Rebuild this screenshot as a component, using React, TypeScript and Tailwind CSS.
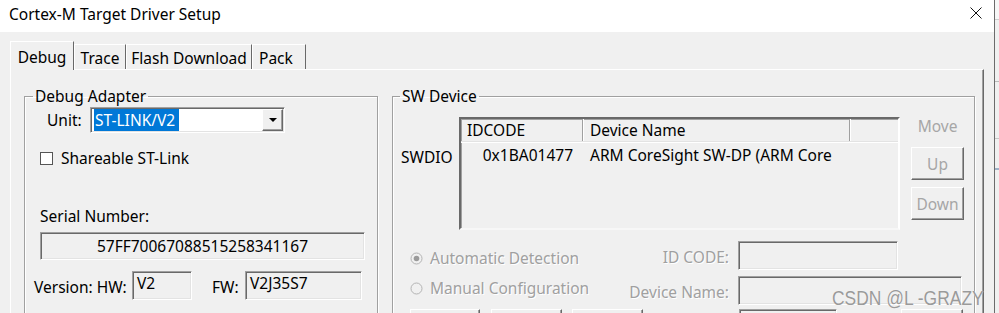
import React from 'react';

const sunken =
  'border border-t-[#a0a0a0] border-l-[#a0a0a0] border-r-white border-b-white shadow-[inset_1px_1px_0_#696969,inset_-1px_-1px_0_#e3e3e3]';
const raised =
  'border border-t-white border-l-white border-r-[#696969] border-b-[#696969] shadow-[inset_-1px_-1px_0_#a0a0a0]';
const etched = 'border border-[#a0a0a0] shadow-[inset_1px_1px_0_#fff,1px_1px_0_#fff]';
const disabled = 'text-[#a0a0a0] [text-shadow:1px_1px_0_#fff]';

function Radio({ checked }: { checked?: boolean }) {
  return (
    <svg width="13" height="13" viewBox="0 0 13 13" className="shrink-0">
      <circle cx="6.5" cy="6.5" r="5.5" fill="#f0f0f0" stroke="#b4b4b4" />
      {checked && <circle cx="6.5" cy="6.5" r="2.8" fill="#9a9a9a" />}
    </svg>
  );
}

function Tab({ label, active, w, left }: { label: string; active?: boolean; w: string; left?: boolean }) {
  return (
    <div
      className={`${w} flex items-center pt-[2px] border-t border-l border-t-white border-l-white border-r border-r-[#696969] ${
        left ? 'justify-start pl-[6px]' : 'justify-center'
      } ${active ? 'h-[29px] -mb-px relative z-10 bg-[#f0f0f0]' : 'h-[25px]'}`}
    >
      {label}
    </div>
  );
}

export default function App() {
  return (
    <div className="w-[999px] h-[313px] overflow-hidden relative flex bg-[#e6e6e6] text-[15.5px] leading-[20px] text-black font-['Noto_Sans',sans-serif]">
      <div className="w-[995px] shrink-0 flex flex-col border-r border-r-[#6b6b6b]">
        {/* title bar */}
        <div className="h-[32px] shrink-0 bg-white flex items-center justify-between pl-[9px] pr-[12px]">
          <span className="-mt-[5px]">Cortex-M Target Driver Setup</span>
          <svg width="12" height="12" viewBox="0 0 12 12" className="-mt-[6px]">
            <path d="M0.5 0.5 L11.5 11.5 M11.5 0.5 L0.5 11.5" stroke="#111" strokeWidth="1" />
          </svg>
        </div>

        <div className="flex-1 bg-[#f0f0f0] pl-[10px] pr-[10px] pt-[9px] flex flex-col">
          {/* tabs */}
          <div className="h-[28px] flex items-end shrink-0">
            <Tab label="Debug" active w="w-[64px]" />
            <Tab label="Trace" w="w-[52px]" />
            <Tab label="Flash Download" w="w-[126px]" />
            <Tab label="Pack" w="w-[54px]" left />
          </div>

          {/* tab panel */}
          <div className="flex-1 border-t border-l border-t-white border-l-white border-r border-r-[#696969] shadow-[inset_-1px_0_0_#a0a0a0] pl-[13px] pt-[16px] flex gap-[14px] items-start">
            {/* Debug Adapter */}
            <fieldset className={`w-[354px] h-[260px] shrink-0 ${etched}`}>
              <legend className="ml-[8px] px-[2px]">Debug Adapter</legend>
              <div className="mt-[1px] h-[26px] flex items-center pl-[22px]">
                <span className="w-[43px]">Unit:</span>
                <div className={`w-[195px] h-[26px] bg-white flex items-center justify-between pl-[3px] pr-[1px] ${sunken}`}>
                  <span className="bg-[#0078d7] text-white h-[22px] leading-[22px] px-[1px] w-[85px] whitespace-nowrap">ST-LINK/V2</span>
                  <div className={`w-[21px] h-[22px] bg-[#f0f0f0] flex items-center justify-center ${raised}`}>
                    <svg width="8" height="4" viewBox="0 0 8 4">
                      <path d="M0 0 H8 L4 4 Z" fill="#000" />
                    </svg>
                  </div>
                </div>
              </div>

              <div className="mt-[15px] h-[20px] flex items-center pl-[15px] gap-[8px]">
                <div className="w-[13px] h-[13px] bg-white border border-[#555]" />
                <span>Shareable ST-Link</span>
              </div>

              <div className="mt-[38px] h-[20px] pl-[15px]">Serial Number:</div>
              <div className={`mt-[6px] ml-[15px] w-[325px] h-[28px] leading-[26px] text-center ${sunken}`}>
                57FF70067088515258341167
              </div>

              <div className="mt-[11px] h-[29px] flex pl-[9px]">
                <span className="w-[98px] pt-[6px] whitespace-nowrap">Version: HW:</span>
                <div className={`w-[60px] h-[29px] pl-[4px] pt-[1px] ${sunken}`}>V2</div>
                <span className="ml-[20px] w-[33px] pt-[6px]">FW:</span>
                <div className={`w-[117px] h-[29px] pl-[4px] pt-[1px] ${sunken}`}>V2J35S7</div>
              </div>
            </fieldset>

            {/* SW Device */}
            <fieldset className={`w-[583px] h-[260px] shrink-0 ${etched}`}>
              <legend className="ml-[7px] px-[2px]">SW Device</legend>
              <div className="mt-[11px] flex">
                <div className="w-[66px] pl-[8px] pt-[30px]">SWDIO</div>
                <div className="w-[441px] h-[113px] border-2 border-t-[#696969] border-l-[#696969] border-r-white border-b-[#f7f7f7] shadow-[inset_1px_1px_0_#a0a0a0]">
                  <div className="h-[23px] flex border-b border-b-[#e3e3e3] shadow-[0_1px_0_#fff]">
                    <div className="w-[122px] pl-[6px] pt-[1px] border-r border-r-[#a0a0a0]">IDCODE</div>
                    <div className="w-[267px] pl-[6px] pt-[1px] border-l border-l-white border-r border-r-[#a0a0a0]">Device Name</div>
                    <div className="flex-1 border-l border-l-white" />
                  </div>
                  <div className="flex pt-[3px] whitespace-nowrap">
                    <div className="w-[122px] text-right pr-[10px]">0x1BA01477</div>
                    <div className="pl-[7px]">ARM CoreSight SW-DP (ARM Core</div>
                  </div>
                </div>
                <div className="ml-[11px] w-[53px] flex flex-col items-center text-[#a6a6a6]">
                  <span className="-mt-px">Move</span>
                  <div className={`mt-[11px] w-[53px] h-[33px] flex items-center justify-center ${raised}`}>Up</div>
                  <div className={`mt-[7px] w-[53px] h-[33px] flex items-center justify-center ${raised}`}>Down</div>
                </div>
              </div>

              {/* detection options */}
              <div className="mt-[11px] h-[29px] flex">
                <div className={`w-[345px] flex items-start whitespace-nowrap ${disabled}`}>
                  <div className="flex items-center gap-[7px] pl-[17px] pt-[7px] flex-1">
                    <Radio checked />
                    <span>Automatic Detection</span>
                  </div>
                  <span className="pr-[9px] pt-[6px]">ID CODE:</span>
                </div>
                <div className={`w-[160px] h-[29px] ${sunken}`} />
              </div>
              <div className="mt-[6px] h-[29px] flex">
                <div className={`w-[345px] flex items-start whitespace-nowrap ${disabled}`}>
                  <div className="flex items-center gap-[7px] pl-[17px] pt-[2px] flex-1">
                    <Radio />
                    <span>Manual Configuration</span>
                  </div>
                  <span className="pr-[9px] pt-[6px]">Device Name:</span>
                </div>
                <div className={`w-[224px] h-[29px] ${sunken}`} />
              </div>
              <div className="mt-[4px] h-[20px] flex pl-[17px]">
                <div className={`w-[70px] h-[20px] ${raised}`} />
                <div className={`ml-[11px] w-[71px] h-[20px] ${raised}`} />
                <div className={`ml-[10px] w-[71px] h-[20px] ${raised}`} />
                <div className={`ml-[96px] w-[98px] h-[20px] ${sunken}`} />
                <div className={`ml-[64px] w-[62px] h-[20px] ${raised}`} />
              </div>
            </fieldset>
          </div>
        </div>
      </div>

      {/* sliver of the window behind */}
      <div className="flex-1 flex flex-col bg-[#f0f0f0]">
        <div className="h-[20px] bg-[#f7f7f7] border-b border-b-[#cfcfcf]" />
        <div className="h-[62px] border-b border-b-[#bcbcbc]" />
        <div className="h-[57px] border-b border-b-[#c8c8c8]" />
        <div className="h-[31px] border-b-2 border-b-[#9fb2c8]" />
        <div className="flex-1" />
      </div>

      {/* watermark */}
      <div className="absolute left-[832px] top-[285px] origin-left scale-x-[0.83] whitespace-nowrap text-[21px] leading-[26px] text-[#9a9a9a] font-['Liberation_Sans',sans-serif] [text-shadow:0_0_1px_#fff]">
        CSDN @L -GRAZY
      </div>
    </div>
  );
}
